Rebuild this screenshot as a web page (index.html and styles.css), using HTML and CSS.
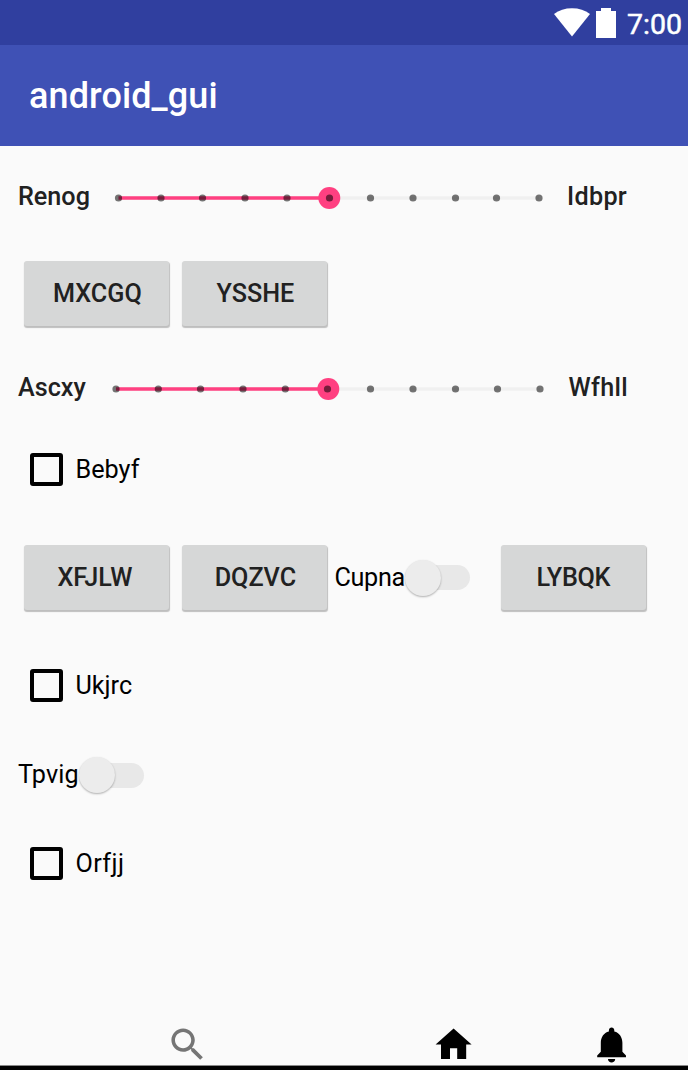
FILE: index.html
```html
<!DOCTYPE html>
<html lang="en">
<head>
<meta charset="utf-8">
<title>android_gui</title>
<link rel="stylesheet" href="styles.css">
</head>
<body>
<div class="screen">
  <div class="status-bar">
    <svg class="wifi" width="36" height="29" viewBox="0 0 36 29"><path d="M18 28.500 0 6Q7.500 0.300 18 .3T36 6Z"/></svg>
    <svg class="battery" width="20" height="30" viewBox="0 0 20 30"><path d="M5 0H15V3H20V30H0V3H5Z"/></svg>
    <span class="clock">7:00</span>
  </div>
  <header class="app-bar"><h1 class="title">android_gui</h1></header>
  <main class="content">
    <div class="row row-slider-a">
      <span class="label label-start">Renog</span>
      <svg class="slider" width="450" height="24" viewBox="110 0 450 24">
        <path class="track" d="M118.500 12H539"/><path class="progress" d="M118.500 12H329.500"/><circle class="thumb" cx="329.300" cy="12" r="11"/>
        <g class="tick"><circle cx="118.500" cy="12" r="3.600"/><circle cx="161" cy="12" r="3.600"/><circle cx="202.500" cy="12" r="3.600"/><circle cx="245" cy="12" r="3.600"/><circle cx="287" cy="12" r="3.600"/><circle cx="329.500" cy="12" r="3.600"/><circle cx="370.500" cy="12" r="3.600"/><circle cx="413" cy="12" r="3.600"/><circle cx="455.500" cy="12" r="3.600"/><circle cx="496.500" cy="12" r="3.600"/><circle cx="539" cy="12" r="3.600"/></g>
      </svg>
      <span class="label label-end">Idbpr</span>
    </div>
    <div class="row row-buttons">
      <button class="button">MXCGQ</button>
      <button class="button">YSSHE</button>
    </div>
    <div class="row row-slider-b">
      <span class="label label-start">Ascxy</span>
      <svg class="slider" width="450" height="24" viewBox="110 0 450 24">
        <path class="track" d="M116 12H540"/><path class="progress" d="M116 12H328"/><circle class="thumb" cx="328.300" cy="12" r="11"/>
        <g class="tick"><circle cx="116" cy="12" r="3.600"/><circle cx="158.300" cy="12" r="3.600"/><circle cx="200.500" cy="12" r="3.600"/><circle cx="243" cy="12" r="3.600"/><circle cx="285.300" cy="12" r="3.600"/><circle cx="327.500" cy="12" r="3.600"/><circle cx="370.500" cy="12" r="3.600"/><circle cx="413" cy="12" r="3.600"/><circle cx="455.500" cy="12" r="3.600"/><circle cx="497.500" cy="12" r="3.600"/><circle cx="540" cy="12" r="3.600"/></g>
      </svg>
      <span class="label label-end label-wide">Wfhll</span>
    </div>
    <div class="row row-check"><span class="checkbox"></span><span class="text">Bebyf</span></div>
    <div class="row row-mixed">
      <button class="button button-first">XFJLW</button>
      <button class="button">DQZVC</button>
      <span class="text switch-text">Cupna</span>
      <span class="switch"><span class="knob"></span></span>
      <button class="button button-end">LYBQK</button>
    </div>
    <div class="row row-check"><span class="checkbox"></span><span class="text">Ukjrc</span></div>
    <div class="row row-switch"><span class="text switch-label">Tpvig</span><span class="switch"><span class="knob"></span></span></div>
    <div class="row row-check"><span class="checkbox"></span><span class="text text-loose">Orfjj</span></div>
  </main>
  <nav class="toolbar">
    <svg class="icon search" viewBox="0 0 24 24"><path d="M15.500 14h-.79l-.28-.27C15.410 12.590 16 11.110 16 9.500 16 5.910 13.090 3 9.500 3S3 5.910 3 9.500 5.910 16 9.500 16c1.610 0 3.090-.59 4.230-1.570l.27.28v.79l5 4.990L20.490 19l-4.990-5zm-6 0C7.010 14 5 11.990 5 9.500S7.010 5 9.500 5 14 7.010 14 9.500 11.990 14 9.500 14z"/></svg>
    <svg class="icon home" viewBox="0 0 24 24"><path d="M10 20v-6h4v6h5v-8h3L12 3 2 12h3v8z"/></svg>
    <svg class="icon bell" viewBox="0 0 24 24"><path d="M12 22c1.100 0 2-.9 2-2h-4c0 1.100.9 2 2 2zm6-6v-5c0-3.070-1.640-5.640-4.500-6.320V4c0-.83-.67-1.500-1.500-1.500s-1.500.67-1.500 1.500v.68C7.630 5.360 6 7.920 6 11v5l-2 2v1h16v-1l-2-2z"/></svg>
  </nav>
</div>
</body>
</html>
```
FILE: styles.css
```css
* { box-sizing: border-box; }
body { margin: 0; font-family: Roboto, sans-serif; font-size: 25.2px; background: #fafafa; }
svg { display: block; flex: none; }
.screen { width: 688px; height: 1070px; display: flex; flex-direction: column; overflow: hidden; }
.status-bar { height: 45px; flex: none; display: flex; align-items: flex-start; justify-content: flex-end; padding: 8px 6px 0 0; background: #303f9f; color: #fff; }
.wifi { fill: #fff; margin-right: 6px; }
.battery { fill: #fff; margin-right: 11px; }
.clock { font-size: 28.500px; line-height: 33px; font-weight: 400; -webkit-text-stroke: 0.5px #fff; }
.app-bar { height: 101px; flex: none; display: flex; align-items: center; padding-left: 29px; background: #3f51b5; }
.title { margin: 0; color: #fff; font-size: 36px; font-weight: 500; line-height: 42px; letter-spacing: 0.1px; }
.content { flex: 1; }
.row { display: flex; align-items: center; }
.row-slider-a { height: 104px; }
.row-buttons { height: 88px; padding: 0 0 1px 24.400px; }
.row-slider-b { height: 102px; }
.row-check { height: 60px; padding: 0 0 1px 30px; }
.row-mixed { height: 156px; padding: 0 0 1px 24.400px; }
.row-switch { height: 118px; padding-left: 18px; }
.label { color: #212121; font-weight: 500; line-height: 30px; padding: 0 0 3px 7px; }
.label-start { width: 110px; padding-left: 18px; }
.label-end { letter-spacing: 0.3px; }
.label-wide { padding-left: 8.500px; }
.text { color: #000; line-height: 30px; }
.row-check .text { padding-top: 1px; }
.text-loose { letter-spacing: 0.4px; }
.track, .progress { fill: none; stroke: #f0f0f0; stroke-width: 3.600; }
.progress { stroke: #ff4081; }
.thumb { fill: #ff4081; }
.tick { fill: #000; fill-opacity: 0.54; }
.button { width: 145px; height: 65px; flex: none; margin: 0 13px 0 0; padding: 0 0 0 1px; border: 0; border-radius: 3px; background: #d6d7d7; color: #212121; font: 500 25.200px/30px Roboto, sans-serif; box-shadow: 0.500px 1.500px 1px rgba(0, 0, 0, 0.24); }
.button-first { padding: 0 4px 0 0; }
.button-end { margin: 0 0 0 31px; padding: 0 1px 0 0; letter-spacing: -0.3px; }
.checkbox { width: 33px; height: 33px; flex: none; margin-right: 12.500px; border: 4px solid #000; border-radius: 3px; }
.switch-text { width: 70px; margin-left: -6px; letter-spacing: -0.3px; }
.switch-label { width: 60px; letter-spacing: 0.1px; }
.switch { position: relative; width: 66px; height: 38px; display: flex; align-items: center; }
.switch::before { content: ""; width: 50px; height: 25px; margin-left: 16px; border-radius: 13px; background: #e8e8e8; }
.knob { position: absolute; left: 1px; top: 1px; width: 36px; height: 36px; border-radius: 50%; background: #ececec; box-shadow: 0 1px 2px rgba(0, 0, 0, 0.3); }
.toolbar { height: 47px; flex: none; display: flex; border-bottom: 4px solid #000; box-shadow: inset 0 -1px #888; }
.icon { width: 43.200px; height: 43.200px; margin-top: -0.500px; fill: #000; }
.search { margin-left: 166px; fill: #757575; }
.home { margin-left: 222.700px; }
.bell { margin-left: 114.800px; }
```
